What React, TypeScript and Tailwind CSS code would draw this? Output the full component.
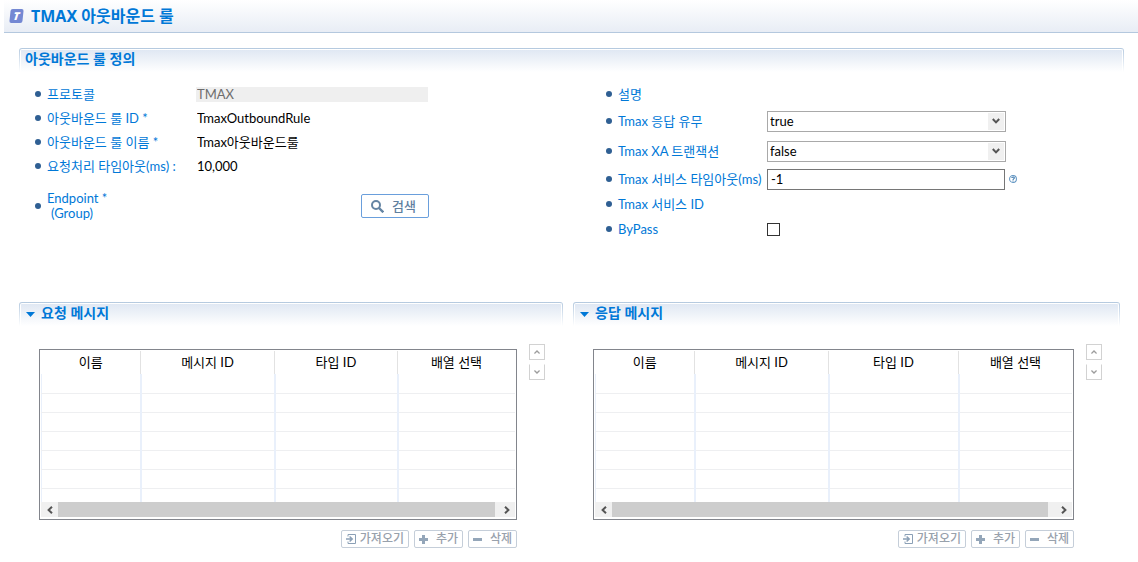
import type { ReactNode } from "react"
import clsx from "clsx"

interface MessageTableProps {
  id: string
  title: string
  columns: { label: string; width: string }[]
  thumb: number
}

const requestColumns = [
  { label: "이름", width: "w-[99px]" },
  { label: "메시지 ID", width: "w-[134px]" },
  { label: "타입 ID", width: "w-[123px]" },
  { label: "배열 선택", width: "w-auto" },
]

const responseColumns = [
  { label: "이름", width: "w-[99px]" },
  { label: "메시지 ID", width: "w-[134px]" },
  { label: "타입 ID", width: "w-[130px]" },
  { label: "배열 선택", width: "w-auto" },
]

/* ─── SECTION BAR ─── */
function SectionBar({ children }: { children: ReactNode }) {
  return (
    <div className="rounded-t-[3px] bg-linear-to-b from-[#b4c9df] to-white px-px pt-px">
      <div className="flex h-[23px] items-center rounded-t-[2px] border-x border-t border-white bg-linear-to-b from-[#e0e8f3] to-white px-1 pb-1 font-['Noto_Sans','Noto_Sans_CJK_KR',sans-serif]">
        {children}
      </div>
    </div>
  )
}

function Field({ label, htmlFor, height, children }: {
  label: ReactNode
  htmlFor?: string
  height: string
  children?: ReactNode
}) {
  return (
    <div className={clsx("flex items-center", height)}>
      <span className="mr-[6px] size-[6px] shrink-0 rounded-full bg-[#2f5f93]" />
      <label htmlFor={htmlFor} className="w-[149px] shrink-0 whitespace-nowrap leading-[15px] text-[#0078d7]">
        {label}
      </label>
      {children}
    </div>
  )
}

function SelectBox({ id, value }: { id: string; value: string }) {
  return (
    <div className="relative w-[239px]">
      <select
        id={id}
        defaultValue={value}
        className="block h-[21px] w-full appearance-none border border-[#a9a9a9] bg-white px-[2px] leading-[18px] outline-none"
      >
        <option>true</option>
        <option>false</option>
      </select>
      <span className="pointer-events-none absolute inset-y-[2px] right-[2px] flex w-4 items-center justify-center bg-[#f0f0f0]">
        <Chevron />
      </span>
    </div>
  )
}

function Chevron({ className }: { className?: string }) {
  return (
    <svg width="8" height="6" viewBox="0 0 8 6" fill="none" stroke="#555" strokeWidth="2" className={className}>
      <path d="M0.8 1 L4 4.4 L7.2 1" />
    </svg>
  )
}

function MoveButton({ up }: { up?: boolean }) {
  return (
    <button
      type="button"
      aria-label={up ? "위로" : "아래로"}
      className={clsx("flex size-4 items-center justify-center border border-[#d2d2d2] bg-white", !up && "border-t-transparent")}
    >
      <svg width="6" height="4" viewBox="0 0 6 4" fill="none" stroke="#9c9c9c" strokeWidth="1.4" className={up ? "" : "rotate-180"}>
        <path d="M0.4 3.5 L3 1 L5.6 3.5" />
      </svg>
    </button>
  )
}

function SmallButton({ icon, children }: { icon: ReactNode; children: ReactNode }) {
  return (
    <button
      type="button"
      className="flex h-[18px] items-center justify-between rounded-[2px] border border-[#c5ced9] bg-white px-1 text-[12px] leading-4 font-medium text-[#98a1ac]"
    >
      {icon}
      {children}
    </button>
  )
}

/* ─── MESSAGE TABLE ─── */
function MessageTable({ id, title, columns, thumb }: MessageTableProps) {
  return (
    <section aria-labelledby={id}>
      <SectionBar>
        <button type="button" aria-label={title} className="mr-[6px] ml-px pt-[2px]">
          <svg width="9" height="5" viewBox="0 0 9 5" fill="#0078d7" className="block">
            <path d="M0 0 H9 L4.5 5 Z" />
          </svg>
        </button>
        <h2 id={id} className="text-[14px] leading-4 font-bold text-[#0078d7]">{title}</h2>
      </SectionBar>

      <div className="flex gap-3 pt-[18px] pr-[18px] pl-5">
        <div className="mt-[5px] min-w-0 flex-1">
          <div className="border border-[#82858c] p-px pb-[2px]">
            <div className="h-[151px] overflow-hidden">
              <table className="w-full table-fixed border-collapse">
                <thead>
                  <tr className="h-[23px]">
                    {columns.map((col) => (
                      <th
                        key={col.label}
                        className={clsx("border-r border-[#e2e2e2] p-0 font-normal text-black last:border-r-0", col.width)}
                      >
                        {col.label}
                      </th>
                    ))}
                  </tr>
                </thead>
                <tbody>
                  {Array.from({ length: 7 }).map((_, i) => (
                    <tr key={i} className="h-[19px]">
                      {columns.map((col) => (
                        <td
                          key={col.label}
                          className="border-r-2 border-b border-r-[#e9f0fb] border-b-[#eeeff1] p-0 first:border-l last:border-r-0 first:border-l-[#e9f0fb]"
                        />
                      ))}
                    </tr>
                  ))}
                </tbody>
              </table>
            </div>
            <div className="flex h-[15px] bg-[#f0f0f0]">
              <button type="button" aria-label="왼쪽으로" className="flex w-[17px] items-center justify-center">
                <Chevron className="rotate-90" />
              </button>
              <div className="flex-1">
                <div className="h-full bg-[#cdcdcd]" style={{ width: `${thumb}%` }} />
              </div>
              <button type="button" aria-label="오른쪽으로" className="flex w-[17px] items-center justify-center">
                <Chevron className="-rotate-90" />
              </button>
            </div>
          </div>

          <div className="mt-[10px] grid grid-cols-[68px_49px_49px] justify-end gap-[5px]">
            <SmallButton
              icon={
                <svg width="10" height="10" viewBox="0 0 10 10" fill="none" stroke="#8ba0b6">
                  <path d="M2 2.5 V0.5 H9.5 V9.5 H2 V7.5" />
                  <path d="M0 5 H6 M3.6 2.5 L6.2 5 L3.6 7.5" strokeWidth="1.5" />
                </svg>
              }
            >
              가져오기
            </SmallButton>
            <SmallButton
              icon={
                <svg width="9" height="9" viewBox="0 0 9 9" fill="#94a6b9">
                  <path d="M3 0 H6 V3 H9 V6 H6 V9 H3 V6 H0 V3 H3 Z" />
                </svg>
              }
            >
              추가
            </SmallButton>
            <SmallButton
              icon={
                <svg width="9" height="3" viewBox="0 0 9 3" fill="#94a6b9">
                  <path d="M0 0 H9 V3 H0 Z" />
                </svg>
              }
            >
              삭제
            </SmallButton>
          </div>
        </div>

        <div className="flex flex-col gap-1">
          <MoveButton up />
          <MoveButton />
        </div>
      </div>
    </section>
  )
}

export default function App() {
  return (
    <div className="min-h-screen bg-white pl-1 font-[Lato,'Noto_Sans_CJK_KR',sans-serif] text-[13px] leading-[15px] text-black">
      <header className="flex h-[33px] items-center border-b border-[#b4c8de] bg-linear-to-b from-white to-[#e8edf5] pl-[6px] font-['Noto_Sans','Noto_Sans_CJK_KR',sans-serif]">
        <span className="mr-2 flex h-[14px] w-[13px] -skew-x-6 items-center justify-center rounded-[2px] bg-[#7488d3] text-[11px] leading-3 font-black text-white italic">
          T
        </span>
        <h1 className="pb-px text-[16px] leading-5 font-bold text-[#0078d7]">TMAX 아웃바운드 룰</h1>
      </header>

      <main className="pt-[15px] pr-[14px] pl-[15px]">
        <SectionBar>
          <h2 className="text-[14px] leading-4 font-bold text-[#0078d7]">아웃바운드 룰 정의</h2>
        </SectionBar>

        <form className="grid grid-cols-[571fr_518fr] pt-[10px] pl-4">
          <div>
            <Field label="프로토콜" htmlFor="protocol" height="h-6">
              <input id="protocol" disabled defaultValue="TMAX" className="h-[15px] w-[232px] bg-[#efefef] px-px text-[#6d6d6d]" />
            </Field>
            <Field label="아웃바운드 룰 ID *" htmlFor="ruleId" height="h-6">
              <input id="ruleId" readOnly defaultValue="TmaxOutboundRule" className="h-[15px] w-[232px] px-px outline-none" />
            </Field>
            <Field label="아웃바운드 룰 이름 *" htmlFor="ruleName" height="h-6">
              <input id="ruleName" readOnly defaultValue="Tmax아웃바운드룰" className="h-[15px] w-[232px] px-px outline-none" />
            </Field>
            <Field label="요청처리 타임아웃(ms) :" htmlFor="timeout" height="h-6">
              <input id="timeout" readOnly defaultValue="10,000" className="h-[15px] w-[232px] px-px outline-none" />
            </Field>
            <Field
              label={<>Endpoint *<span className="block pl-1">(Group)</span></>}
              htmlFor="endpoint"
              height="h-14"
            >
              <div className="flex w-[233px] justify-end">
                <button
                  id="endpoint"
                  type="button"
                  className="flex h-6 w-[68px] items-center gap-2 rounded-[2px] border border-[#6a9fdc] bg-white pl-[9px] font-medium text-[#5f7f9f]"
                >
                  <svg width="13" height="13" viewBox="0 0 13 13" fill="none" stroke="#6484a3" strokeWidth="2">
                    <circle cx="5" cy="5" r="4" />
                    <path d="M8 8 L12.3 12.3" strokeWidth="2.4" />
                  </svg>
                  검색
                </button>
              </div>
            </Field>
          </div>

          <div>
            <Field label="설명" height="h-6" />
            <Field label="Tmax 응답 유무" htmlFor="reply" height="h-[30px]">
              <SelectBox id="reply" value="true" />
            </Field>
            <Field label="Tmax XA 트랜잭션" htmlFor="xa" height="h-[30px]">
              <SelectBox id="xa" value="false" />
            </Field>
            <Field label="Tmax 서비스 타임아웃(ms)" htmlFor="svcTimeout" height="h-[26px]">
              <input
                id="svcTimeout"
                defaultValue="-1"
                className="h-[21px] w-[238px] border border-[#767676] bg-white px-[3px] outline-none"
              />
              <svg width="8" height="8" viewBox="0 0 7 7" fill="none" stroke="#5f94c2" className="ml-1">
                <circle cx="3.5" cy="3.5" r="3" strokeWidth="0.9" />
                <path d="M2.4 2.7 C2.5 1.3 4.7 1.4 4.6 2.7 C4.5 3.4 3.5 3.3 3.5 4.3 M3.5 4.9 V5.7" stroke="#2f6fa8" strokeWidth="0.9" />
              </svg>
            </Field>
            <Field label="Tmax 서비스 ID" height="h-6" />
            <Field label="ByPass" htmlFor="bypass" height="h-[26px]">
              <input id="bypass" type="checkbox" className="size-[13px] appearance-none border border-[#333] bg-white checked:bg-[#333]" />
            </Field>
          </div>
        </form>

        <div className="mt-[60px] grid grid-cols-[544fr_547fr] gap-[10px] pr-1">
          <MessageTable id="request" title="요청 메시지" columns={requestColumns} thumb={99.3} />
          <MessageTable id="response" title="응답 메시지" columns={responseColumns} thumb={98.4} />
        </div>
      </main>
    </div>
  )
}
